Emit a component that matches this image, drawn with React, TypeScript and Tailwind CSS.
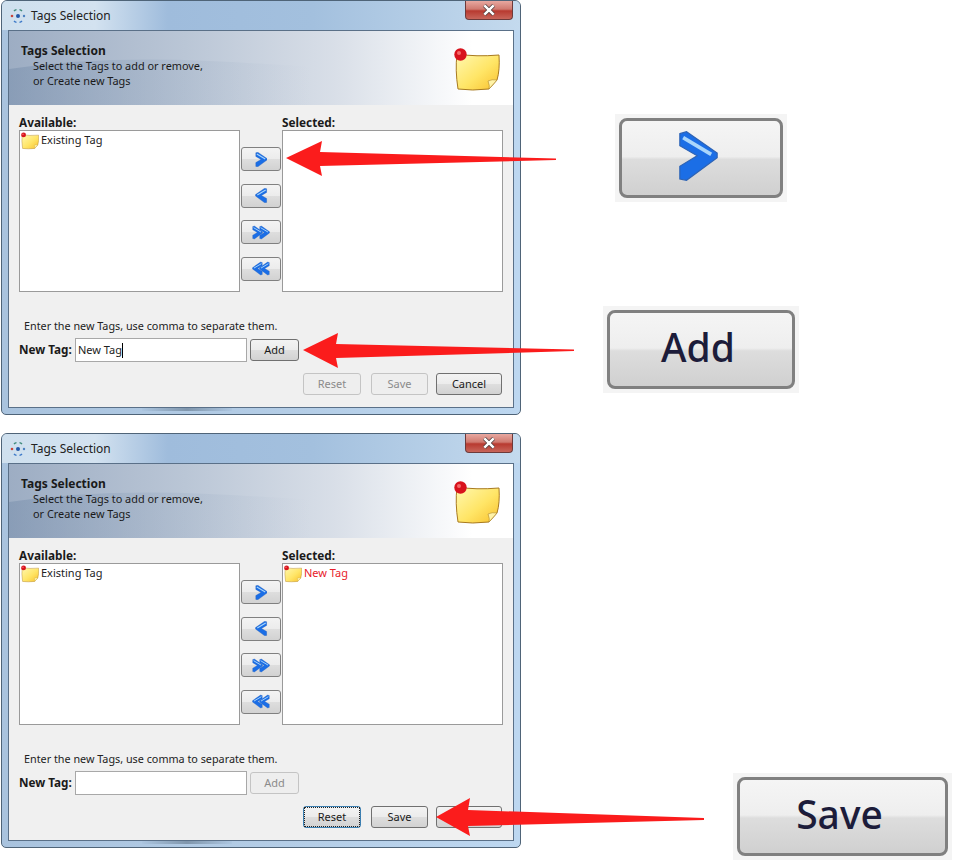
type BtnProps = {
  label?: string;
  disabled?: boolean;
  focused?: boolean;
  className?: string;
};

function StickyNote({ className }: { className: string }) {
  return (
    <svg viewBox="0 0 46 44" className={className}>
      <defs>
        <linearGradient id="noteFill" x1="0" y1="0" x2="1" y2="1">
          <stop offset="0" stopColor="#fff8b0" />
          <stop offset="0.55" stopColor="#ffe566" />
          <stop offset="1" stopColor="#f8c02c" />
        </linearGradient>
      </defs>
      <path
        d="M3 6 Q22 9 45 7 Q46 22 43 32 L35 41 Q18 43 4 41 Q1 22 3 6 Z"
        fill="url(#noteFill)"
        stroke="#a87a20"
        strokeWidth="1"
      />
      <path d="M43 32 Q38 31 34 33 Q36 38 35 41 Z" fill="#fff3a8" stroke="#b08a30" strokeWidth="0.6" />
      <circle cx="6.5" cy="6.5" r="6.2" fill="#d8121c" />
      <circle cx="5" cy="5" r="2" fill="#f56a6a" />
    </svg>
  );
}

function AppLogo() {
  return (
    <svg viewBox="0 0 16 16" className="w-[16px] h-[16px] shrink-0">
      <circle cx="8" cy="8" r="2" fill="#2257a8" />
      <circle cx="2" cy="8" r="1.3" fill="#c8453c" />
      <circle cx="14" cy="8" r="1.2" fill="#4a7fc0" />
      <path d="M4 3 Q5 1.8 6.5 1.6 M9.5 1.6 Q11 1.8 12 3" stroke="#3f8a7a" strokeWidth="1.3" fill="none" />
      <path d="M4 13 Q5 14.2 6.5 14.4 M9.5 14.4 Q11 14.2 12 13" stroke="#3b78c8" strokeWidth="1.3" fill="none" />
    </svg>
  );
}

function Chevron({ x = 0 }: { x?: number }) {
  return (
    <g transform={`translate(${x} 0)`}>
      <path
        d="M0.8 0.8 L2.8 0.2 L12 6.6 L12 8 L2.8 14.8 L0.8 14.4 L0.8 10.6 L6 7.4 L0.8 4.4 Z"
        fill="#1b6ee6"
        stroke="#2d63b5"
        strokeWidth="0.35"
      />
      <path d="M1.8 2 L10.2 7" stroke="#a9d6fb" strokeWidth="1.1" />
    </g>
  );
}

function Arrow({ double, left, className }: { double?: boolean; left?: boolean; className: string }) {
  return (
    <svg
      viewBox={double ? "0 0 20.5 15" : "0 0 12.5 15"}
      className={`${className} ${left ? "-scale-x-100" : ""}`}
    >
      <Chevron />
      {double && <Chevron x={8} />}
    </svg>
  );
}

function Btn({ label, disabled, focused, className = "" }: BtnProps) {
  const border = disabled ? "border-[#c4c4c4]" : focused ? "border-[#3c7fb1]" : "border-[#707070]";
  const bg = disabled
    ? "bg-[#eeeeee]"
    : "bg-[linear-gradient(#f3f3f3_0%,#ececec_48%,#dedede_50%,#d2d2d2_100%)]";
  return (
    <div
      className={`flex items-center justify-center h-[22px] rounded-[3px] border text-[11px] ${border} ${bg} ${
        disabled ? "text-[#8b8b8b]" : "text-[#1a1a1a]"
      } ${className}`}
    >
      {focused ? (
        <span className="flex items-center justify-center w-full h-full border border-dotted border-[#222222]">{label}</span>
      ) : (
        label
      )}
    </div>
  );
}

function MoveBtn({ double, left }: { double?: boolean; left?: boolean }) {
  return (
    <div className="flex items-center justify-center w-[40px] h-[24px] rounded-[3px] border border-[#808080] bg-[linear-gradient(#f3f3f3_0%,#ececec_48%,#dedede_50%,#d2d2d2_100%)]">
      <Arrow double={double} left={left} className={double ? "w-[18px] h-[15px]" : "w-[12.5px] h-[15px]"} />
    </div>
  );
}

function TagItem({ text, red }: { text: string; red?: boolean }) {
  return (
    <div className="flex items-center gap-[2px] h-[18px] pl-[1px] pt-[1px]">
      <StickyNote className="w-[18px] h-[18px] shrink-0" />
      <span className={`text-[11px] ${red ? "text-[#e8202a]" : "text-[#222222]"}`}>{text}</span>
    </div>
  );
}

function ListBox({ children }: { children?: React.ReactNode }) {
  return <div className="w-[221px] h-[162px] bg-white border border-[#9a9a9a]">{children}</div>;
}

function TagsDialog({ after }: { after?: boolean }) {
  return (
    <div className="relative w-[520px] h-[415px] shrink-0 rounded-t-[6px] rounded-b-[5px] border border-[#4f6478] bg-[linear-gradient(90deg,#a9c3de_0%,#b4cde6_55%,#bdd7f0_100%)] px-[6px]">
      <div className="flex items-center h-[29px] -mx-[6px] gap-[5px] pl-[8px] rounded-t-[5px] text-[12px] text-[#222222] bg-[linear-gradient(90deg,#cfe0ee_0%,#d3e2f0_18%,#9fbcdc_32%,#a3c0de_60%,#c4daee_100%)]">
        <AppLogo />
        <span>Tags Selection</span>
      </div>
      <div className="absolute top-0 right-[7px] flex items-center justify-center w-[48px] h-[19px] rounded-b-[4px] border border-t-0 border-[#6d3a3a] bg-[linear-gradient(#e8a8a0_0%,#d07a70_45%,#b83a30_55%,#c8655a_100%)]">
        <svg viewBox="0 0 12 10" className="w-[14px] h-[12px]">
          <path d="M2 1 L10 9 M10 1 L2 9" stroke="#4a3a3a" strokeWidth="3.4" />
          <path d="M2 1 L10 9 M10 1 L2 9" stroke="#ffffff" strokeWidth="2.2" />
        </svg>
      </div>

      <div className="w-[506px] h-[378px] border border-[#5a7088] bg-[#f0f0f0]">
        <div className="relative h-[74px] bg-[linear-gradient(90deg,#9dadc3_0%,#bac6d6_35%,#d9dfe8_65%,#ffffff_92%)] overflow-hidden">
          <svg viewBox="0 0 504 74" preserveAspectRatio="none" className="absolute inset-0 w-full h-full">
            <defs>
              <linearGradient id="headerShade" x1="0" y1="0" x2="1" y2="0">
                <stop offset="0" stopColor="#7189a8" stopOpacity="0.45" />
                <stop offset="0.6" stopColor="#9fb0c6" stopOpacity="0" />
              </linearGradient>
            </defs>
            <path d="M0 38 Q90 25 200 30 T504 50 L504 74 L0 74 Z" fill="url(#headerShade)" />
          </svg>
          <div className="relative pl-[12px] pt-[12px] text-[10.9px] leading-[15px] text-[#1a1a1a]">
            <div className="font-bold text-[12px]">Tags Selection</div>
            <div className="pl-[12px]">Select the Tags to add or remove,</div>
            <div className="pl-[12px]">or Create new Tags</div>
          </div>
          <StickyNote className="absolute top-[17px] right-[13px] w-[46px] h-[44px]" />
        </div>

        <div className="pl-[10px] pt-[9px]">
          <div className="flex h-[16px] text-[11.8px] font-bold text-[#1a1a1a] leading-[16px]">
            <span className="w-[263px]">Available:</span>
            <span>Selected:</span>
          </div>
          <div className="flex">
            <ListBox>
              <TagItem text="Existing Tag" />
            </ListBox>
            <div className="flex flex-col items-center gap-[12.6px] w-[42px] pt-[17px]">
              <MoveBtn />
              <MoveBtn left />
              <MoveBtn double />
              <MoveBtn double left />
            </div>
            <ListBox>{after && <TagItem text="New Tag" red />}</ListBox>
          </div>
          <div className="mt-[27px] pl-[5px] h-[14px] text-[10.8px] leading-[14px] text-[#222222]">
            Enter the new Tags, use comma to separate them.
          </div>
          <div className="flex items-center mt-[5px]">
            <span className="w-[56px] text-[11.7px] font-bold text-[#1a1a1a]">New Tag:</span>
            <div className="flex items-center w-[172px] h-[24px] pl-[2px] bg-white border border-[#a8a8a8] text-[11px] text-[#222222]">
              {!after && (
                <>
                  New Tag<span className="w-px h-[15px] bg-black" />
                </>
              )}
            </div>
            <Btn label="Add" disabled={after} className="w-[49px] ml-[3px]" />
          </div>
          <div className="flex justify-end pr-[11px] mt-[11px]">
            <Btn label="Reset" disabled={!after} focused={after} className="w-[58px]" />
            <Btn label="Save" disabled={!after} className="w-[57px] ml-[10px]" />
            <Btn label="Cancel" className="w-[66px] ml-[8px]" />
          </div>
        </div>
      </div>
      <div className="absolute bottom-[3px] left-[140px] w-[90px] h-[3px] bg-[linear-gradient(90deg,#a9c3de,#5f7488,#a9c3de)] opacity-60" />
    </div>
  );
}

function Callout({ className, children }: { className: string; children: React.ReactNode }) {
  return (
    <div className={`absolute flex items-center justify-center p-[4px] bg-[#f4f4f4] ${className}`}>
      <div className="flex items-center justify-center w-full h-full rounded-[8px] border-[3px] border-[#808080] bg-[linear-gradient(#f5f5f5_0%,#eeeeee_48%,#dddddd_52%,#d0d0d0_100%)] text-[39px] font-medium text-[#1c1c3a] pb-[5px] pr-[6px]">
        {children}
      </div>
    </div>
  );
}

export default function App() {
  return (
    <div
      className="relative w-[953px] h-[862px] bg-white overflow-hidden flex flex-col gap-[18px] pl-px"
      style={{ fontFamily: '"Noto Sans", "Liberation Sans", Arial, sans-serif' }}
    >
      <TagsDialog />
      <TagsDialog after />

      {/* red annotation arrows lie over the dialogs */}
      <svg viewBox="0 0 953 862" className="absolute inset-0 w-[953px] h-[862px] pointer-events-none">
        <polygon points="286,158 322,141 320,152 556,158.5 556,160 320,166 322,176" fill="#fb1c1c" />
        <polygon points="303,350 338,333 336,344 574,349.5 574,351 336,358 338,368" fill="#fb1c1c" />
        <polygon points="436,817 470,798 468,810 704,818 704,820 468,826 470,836" fill="#fb1c1c" />
      </svg>

      <Callout className="left-[615px] top-[114px] w-[172px] h-[88px]">
        <Arrow className="w-[42px] h-[50px]" />
      </Callout>
      <Callout className="left-[603px] top-[306px] w-[196px] h-[87px]">Add</Callout>
      <Callout className="left-[733px] top-[773px] w-[219px] h-[87px]">Save</Callout>
    </div>
  );
}
